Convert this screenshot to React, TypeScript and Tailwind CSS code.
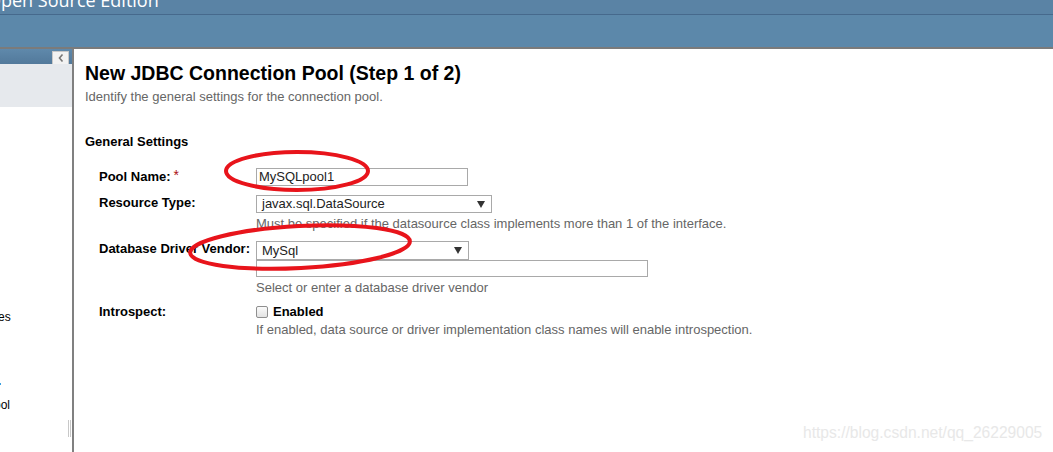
import React from "react";

const font = { fontFamily: '"Liberation Sans", Arial, sans-serif' };

function Arrow() {
  return (
    <svg width="8" height="7" viewBox="0 0 8 7" className="shrink-0">
      <polygon points="0,0 8,0 4,7" fill="#333" />
    </svg>
  );
}

export default function App() {
  return (
    <div className="relative w-[1053px] h-[452px] overflow-hidden bg-white" style={font}>
      {/* Header */}
      <div className="h-[14px] bg-[#5a83a5] overflow-hidden flex">
        <span
          className="ml-[-13px] mt-[-12px] text-[18px] leading-[24px] font-medium text-white whitespace-nowrap"
          style={{ fontFamily: '"Open Sans", "Noto Sans", sans-serif' }}
        >
          Open Source Edition
        </span>
      </div>
      <div className="h-px bg-[#46698c]" />
      <div className="h-[32px] bg-[#5c88aa]" />
      <div className="h-[2px] bg-[#7b7b7b]" />

      <div className="flex h-[403px]">
        {/* Sidebar */}
        <div className="w-[72px] shrink-0 flex flex-col relative">
          <div className="h-[15px] bg-gradient-to-b from-[#5f89ab] to-[#52799b] flex items-start justify-end pr-[3px] pt-[2px]">
            <div className="w-[17px] h-[14px] bg-[#f2f2f2] border border-[#c8c8c8] flex items-center justify-center">
              <svg width="6" height="8" viewBox="0 0 6 8">
                <polyline points="4.5,0.5 1.5,4 4.5,7.5" fill="none" stroke="#777" strokeWidth="1.6" />
              </svg>
            </div>
          </div>
          <div className="h-[43px] bg-[#e6e9ed]" />
          <div className="flex-1 relative text-[12px] text-black">
            <span className="absolute left-[-2px] top-[203px] leading-[14px]">es</span>
            <span className="absolute left-[-1px] top-[276px] w-[2px] h-[2px] bg-[#3aa0e0]" />
            <span className="absolute left-[-6px] top-[291px] leading-[14px]">ool</span>
            <div className="absolute right-[1px] top-[313px] w-[3px] h-[17px] border-x border-[#c8c8c8]" />
          </div>
        </div>
        <div className="w-[2px] shrink-0 bg-[#808080]" />

        {/* Main */}
        <div className="flex-1 pl-[11px] text-black">
          <h1 className="mt-[12px] text-[19.5px] leading-[24px] font-bold text-black">
            New JDBC Connection Pool (Step 1 of 2)
          </h1>
          <p className="mt-[4px] text-[13px] leading-[16px] text-[#666]">
            Identify the general settings for the connection pool.
          </p>
          <h2 className="mt-[29px] text-[13px] leading-[16px] font-bold text-black">General Settings</h2>

          <div className="ml-[14px]">
            {/* Pool Name */}
            <div className="mt-[18px] flex items-start">
              <div className="w-[157px] shrink-0 text-[13px] font-bold leading-[16px] pt-[1px]">
                Pool Name:<span className="text-[#a11] font-normal ml-[3px] align-top text-[14px] leading-[12px]">*</span>
              </div>
              <div className="w-[212px] h-[18px] border border-[#a9a9a9] text-[13px] leading-[16px] pl-[2px] text-[#222]">
                MySQLpool1
              </div>
            </div>

            {/* Resource Type */}
            <div className="mt-[9px] flex items-start">
              <div className="w-[157px] shrink-0 text-[13px] font-bold leading-[16px]">Resource Type:</div>
              <div className="flex flex-col">
                <div className="w-[236px] h-[18px] border border-[#a9a9a9] flex items-center justify-between pl-[5px] pr-[6px] text-[13px] text-[#222]">
                  <span className="leading-[16px]">javax.sql.DataSource</span>
                  <Arrow />
                </div>
                <div className="mt-[3px] text-[13px] leading-[16px] text-[#666] whitespace-nowrap">
                  Must be specified if the datasource class implements more than 1 of the interface.
                </div>
              </div>
            </div>

            {/* Database Driver Vendor */}
            <div className="mt-[9px] flex items-start">
              <div className="w-[157px] shrink-0 text-[13px] font-bold leading-[16px]">Database Driver Vendor:</div>
              <div className="flex flex-col">
                <div className="w-[213px] h-[19px] border border-[#a9a9a9] flex items-center justify-between pl-[5px] pr-[6px] text-[13px] text-[#222]">
                  <span className="leading-[16px]">MySql</span>
                  <Arrow />
                </div>
                <div className="w-[392px] h-[17px] border border-[#a9a9a9]" />
                <div className="mt-[3px] text-[13px] leading-[16px] text-[#666] whitespace-nowrap">
                  Select or enter a database driver vendor
                </div>
              </div>
            </div>

            {/* Introspect */}
            <div className="mt-[8px] flex items-start">
              <div className="w-[157px] shrink-0 text-[13px] font-bold leading-[16px]">Introspect:</div>
              <div className="flex flex-col">
                <div className="flex items-center h-[16px]">
                  <div className="w-[12px] h-[12px] border border-[#8f8f8f] rounded-[2px] bg-gradient-to-b from-[#fbfbfb] to-[#e3e3e3]" />
                  <span className="ml-[5px] text-[13px] font-bold leading-[16px]">Enabled</span>
                </div>
                <div className="mt-[2px] text-[13px] leading-[16px] text-[#666] whitespace-nowrap">
                  If enabled, data source or driver implementation class names will enable introspection.
                </div>
              </div>
            </div>
          </div>
        </div>
      </div>

      {/* Red annotation ellipses */}
      <svg className="absolute left-0 top-0 pointer-events-none" width="1053" height="452">
        <ellipse cx="297" cy="171" rx="71" ry="19" fill="none" stroke="#e8141b" strokeWidth="4" />
        <ellipse
          cx="300"
          cy="247"
          rx="110"
          ry="21"
          fill="none"
          stroke="#e8141b"
          strokeWidth="4"
          transform="rotate(-3 300 247)"
        />
      </svg>

      {/* Watermark */}
      <div className="absolute left-[803px] top-[424px] text-[15.6px] leading-[18px] text-[#e8e8e8] whitespace-nowrap">
        https://blog.csdn.net/qq_26229005
      </div>
    </div>
  );
}
